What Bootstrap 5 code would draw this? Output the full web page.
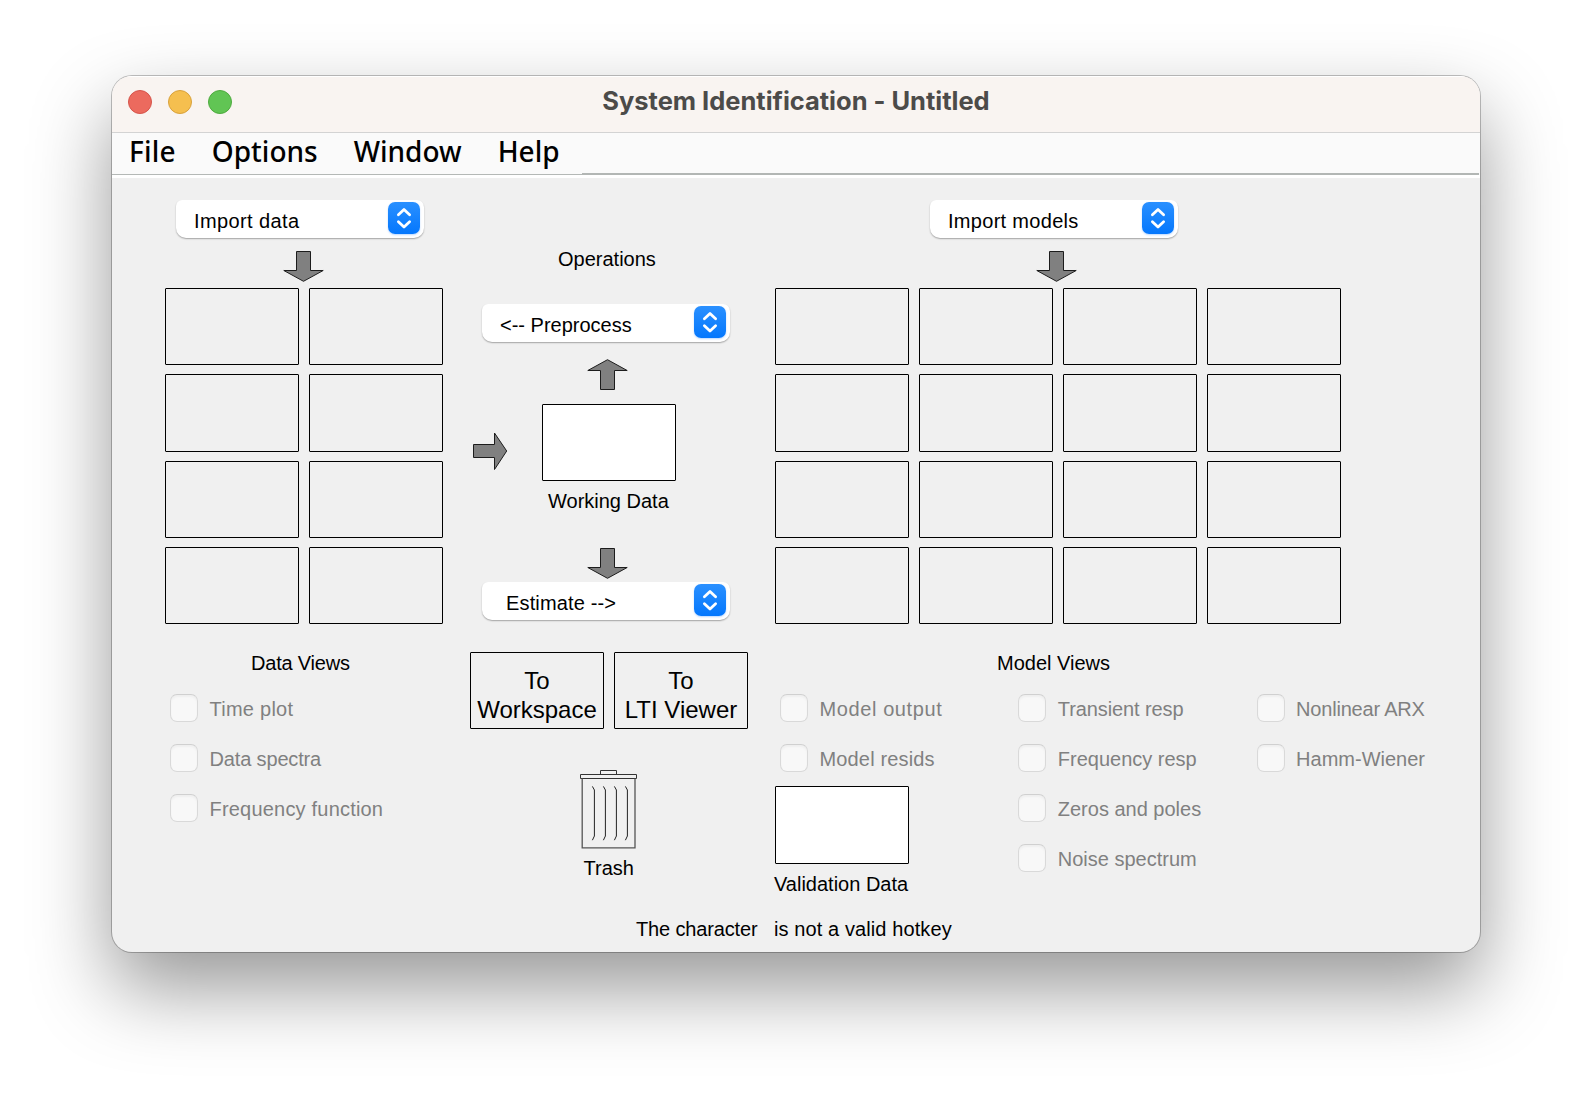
<!DOCTYPE html>
<html lang="en">
<head>
<meta charset="utf-8">
<title>System Identification - Untitled</title>
<link href="https://cdn.jsdelivr.net/npm/bootstrap@5.3.0/dist/css/bootstrap.min.css" rel="stylesheet">
<style>
body{background:#fff;height:1100px;overflow:hidden;font:20px/24px "Liberation Sans",Arial,sans-serif;color:#000;padding:76px 0 0 112px}
.win{width:1368px;height:876px;border-radius:20px;background:#f0f0f0;box-shadow:0 0 0 1px rgba(0,0,0,.24),0 36px 80px rgba(0,0,0,.41)}
.win-inner{border-radius:20px;overflow:hidden;height:876px}
.titlebar{height:57px;background:#f9f4f1;border-bottom:1px solid #d3d3d3;box-shadow:inset 0 1px 0 #fff;padding-left:16px}
.lights{gap:16px;width:120px}
.light{width:24px;height:24px;border-radius:50%;margin-top:-4px}
.red{background:#ec6a5e;border:1px solid #d5544b}
.amber{background:#f5bf4f;border:1px solid #d8a13c}
.green{background:#61c554;border:1px solid #4faa3f}
.win-title{font:700 25.5px/30px Inter,sans-serif;color:#4c4b49;margin:-7px 0 0;width:1096px;letter-spacing:-.02px}
.menus{height:45px;background:#fafafa;border-bottom:3px solid #fff;font:500 28px/40px "Noto Sans",sans-serif}
.menus .items{width:470px;height:42px;border-bottom:1px solid #b4b8b6;padding-left:16px}
.menus .rest{height:42px;border-bottom:2px solid #b2b6b4;margin-right:1px}
.menus a{color:#000;text-decoration:none;display:block;line-height:37px}
.board{padding-left:53px;column-gap:27px;height:718px}
.side{width:278px}
.models{width:650px}
.popup{width:248px;height:38px;background:#fff;border:0;border-radius:6px 7px 10px 10px;padding:2px 4px 0 18px;box-shadow:0 1px 1.5px rgba(0,0,0,.32);clip-path:inset(0 -4px -5px -4px);margin-top:22px}
.popup .lbl{padding-top:7px}
.stepper{width:32px;height:32px;border-radius:7px;background:linear-gradient(#2a90ff,#0477fd);box-shadow:0 1px 2px rgba(0,110,255,.28)}
.stepper svg,.arrow,.trash{display:block}
.arrow{fill:#808080;stroke:#1c1c1c;stroke-width:1}
.slots{display:grid;grid-template-rows:77px 78px 77px 77px;gap:9px 10px}
.slots.two{grid-template-columns:repeat(2,134px)}
.slots.four{grid-template-columns:repeat(4,134px)}
.slot{border:1px solid #000;border-radius:1px}
.well{width:134px;height:77px;background:#fff}
.drop{width:134px;height:77px;background:none;font-size:24px;line-height:29px;padding:9px 0 0;text-align:center;white-space:nowrap}
.checks{gap:22px;padding-left:5px}
.checks .line{height:28px}
.cbox.form-check-input{width:28px;height:28px;margin:0;border:1px solid #d9d9d9;border-top-color:#d0d0d0;border-radius:7px;background:#f8f8f8;box-shadow:inset 0 2px 2px #efefef;opacity:1}
.checks label{color:#808080;margin:2px 0 0 11.5px;white-space:nowrap}
.t24{height:24px;white-space:nowrap}
.status{padding-left:524px}
</style>
<script src="https://cdn.jsdelivr.net/npm/bootstrap@5.3.0/dist/js/bootstrap.bundle.min.js"></script>
</head>
<body>
<svg width="0" height="0" class="position-absolute">
  <defs>
    <path id="down" d="M14.5 1.5H28.5V20.5H41.2L21.5 31.3L1.8 20.5H14.5Z"/>
    <path id="chev" d="M10.4 12.7L16 7.5L21.6 12.7M10.4 19.8L16 25L21.6 19.8" fill="none" stroke="#fff" stroke-width="2.8" stroke-linecap="round" stroke-linejoin="round"/>
  </defs>
</svg>
<main class="win"><div class="win-inner">
  <header class="titlebar d-flex align-items-center">
    <div class="lights d-flex"><span class="light red"></span><span class="light amber"></span><span class="light green"></span></div>
    <h1 class="win-title text-center">System Identification - Untitled</h1>
  </header>
  <nav class="menus d-flex">
    <div class="items d-flex">
      <a href="#" style="letter-spacing:.2px;margin-left:1px">File</a>
      <a href="#" style="margin-left:36px">Options</a>
      <a href="#" style="margin-left:36px">Window</a>
      <a href="#" style="margin-left:36px">Help</a>
    </div>
    <div class="rest flex-grow-1"></div>
  </nav>
  <div class="board d-flex">
    <section class="side d-flex flex-column">
      <button class="popup d-flex justify-content-between align-items-start" style="margin-left:11px"><span class="lbl" style="letter-spacing:.4px">Import data</span><span class="stepper"><svg width="32" height="32"><use href="#chev"/></svg></span></button>
      <svg class="arrow" width="44" height="34" style="margin:12px 0 4px 116.5px"><use href="#down"/></svg>
      <div class="slots two"><div class="slot"></div><div class="slot"></div><div class="slot"></div><div class="slot"></div><div class="slot"></div><div class="slot"></div><div class="slot"></div><div class="slot"></div></div>
      <div class="t24" style="margin:27px 0 19px 86px;letter-spacing:-.2px">Data Views</div>
      <div class="checks d-flex flex-column">
        <div class="line d-flex align-items-center"><input id="c1" class="form-check-input cbox" type="checkbox" disabled><label for="c1" style="letter-spacing:.25px">Time plot</label></div>
        <div class="line d-flex align-items-center"><input id="c2" class="form-check-input cbox" type="checkbox" disabled><label for="c2" style="letter-spacing:-.15px">Data spectra</label></div>
        <div class="line d-flex align-items-center"><input id="c3" class="form-check-input cbox" type="checkbox" disabled><label for="c3" style="letter-spacing:.2px">Frequency function</label></div>
      </div>
    </section>

    <section class="side d-flex flex-column">
      <div class="t24" style="margin:69px 0 0 88px">Operations</div>
      <button class="popup d-flex justify-content-between align-items-start" style="margin:33px 0 0 12px"><span class="lbl">&lt;-- Preprocess</span><span class="stepper"><svg width="32" height="32"><use href="#chev"/></svg></span></button>
      <svg class="arrow" width="44" height="34" style="margin:16px 0 0 116px"><use href="#down" transform="matrix(1 0 0 -1 0 33)"/></svg>
      <div class="d-flex" style="margin-top:12px">
        <svg class="arrow" width="40" height="42" style="margin:26px 32px 0 0"><path d="M3.5 14.5H24.5V3L36.7 21L24.5 39.5V27.5H3.5Z"/></svg>
        <div class="slot well"></div>
      </div>
      <div class="t24" style="margin:8px 0 0 78px">Working Data</div>
      <svg class="arrow" width="44" height="34" style="margin:34px 0 1px 116px"><use href="#down"/></svg>
      <button class="popup d-flex justify-content-between align-items-start" style="margin:0 0 0 12px"><span class="lbl" style="padding-left:6px;letter-spacing:.15px">Estimate --&gt;</span><span class="stepper"><svg width="32" height="32"><use href="#chev"/></svg></span></button>
      <div class="d-flex" style="margin-top:32px;gap:10px">
        <button class="slot drop">To<br>Workspace</button>
        <button class="slot drop">To<br>LTI Viewer</button>
      </div>
      <svg class="trash" width="60" height="82" style="margin:40px 0 0 109px" fill="none" stroke="#333" stroke-width="1">
        <path d="M21.5 5.5V1.5H37.5V5.5"/>
        <path d="M1.5 5.5H57.5V9.5H1.5Z"/>
        <path d="M3.2 9.5V78.9H56V9.5" stroke="#555" stroke-width="1.3"/>
        <path id="rib" d="M13.4 17.4L15.4 21V67L13.4 71.2" stroke="#222"/>
        <use href="#rib" x="11"/><use href="#rib" x="22"/><use href="#rib" x="33"/>
      </svg>
      <div class="t24" style="margin:5px 0 0 113.5px">Trash</div>
    </section>

    <section class="models d-flex flex-column">
      <button class="popup d-flex justify-content-between align-items-start" style="margin-left:155px"><span class="lbl" style="letter-spacing:.3px">Import models</span><span class="stepper"><svg width="32" height="32"><use href="#chev"/></svg></span></button>
      <svg class="arrow" width="44" height="34" style="margin:12px 0 4px 260px"><use href="#down"/></svg>
      <div class="slots four"><div class="slot"></div><div class="slot"></div><div class="slot"></div><div class="slot"></div><div class="slot"></div><div class="slot"></div><div class="slot"></div><div class="slot"></div><div class="slot"></div><div class="slot"></div><div class="slot"></div><div class="slot"></div><div class="slot"></div><div class="slot"></div><div class="slot"></div><div class="slot"></div></div>
      <div class="t24" style="margin:27px 0 19px 222px">Model Views</div>
      <div class="d-flex">
        <div style="width:242px">
          <div class="checks d-flex flex-column">
            <div class="line d-flex align-items-center"><input id="c4" class="form-check-input cbox" type="checkbox" disabled><label for="c4" style="letter-spacing:.6px">Model output</label></div>
            <div class="line d-flex align-items-center"><input id="c5" class="form-check-input cbox" type="checkbox" disabled><label for="c5" style="letter-spacing:.15px">Model resids</label></div>
          </div>
          <div class="slot well" style="margin-top:14px;height:78px"></div>
          <div class="t24" style="margin:8px 0 0 -1px">Validation Data</div>
        </div>
        <div class="checks d-flex flex-column" style="width:242px">
          <div class="line d-flex align-items-center"><input id="c6" class="form-check-input cbox" type="checkbox" disabled><label for="c6" style="letter-spacing:-.1px">Transient resp</label></div>
          <div class="line d-flex align-items-center"><input id="c7" class="form-check-input cbox" type="checkbox" disabled><label for="c7">Frequency resp</label></div>
          <div class="line d-flex align-items-center"><input id="c8" class="form-check-input cbox" type="checkbox" disabled><label for="c8">Zeros and poles</label></div>
          <div class="line d-flex align-items-center"><input id="c9" class="form-check-input cbox" type="checkbox" disabled><label for="c9">Noise spectrum</label></div>
        </div>
        <div class="checks d-flex flex-column">
          <div class="line d-flex align-items-center"><input id="c10" class="form-check-input cbox" type="checkbox" disabled><label for="c10" style="letter-spacing:-.2px">Nonlinear ARX</label></div>
          <div class="line d-flex align-items-center"><input id="c11" class="form-check-input cbox" type="checkbox" disabled><label for="c11">Hamm-Wiener</label></div>
        </div>
      </div>
    </section>
  </div>
  <footer class="status d-flex t24" style="margin-top:21px"><span style="width:138px;letter-spacing:-.15px">The character</span><span style="letter-spacing:.1px">is not a valid hotkey</span></footer>
</div></main>
</body>
</html>
